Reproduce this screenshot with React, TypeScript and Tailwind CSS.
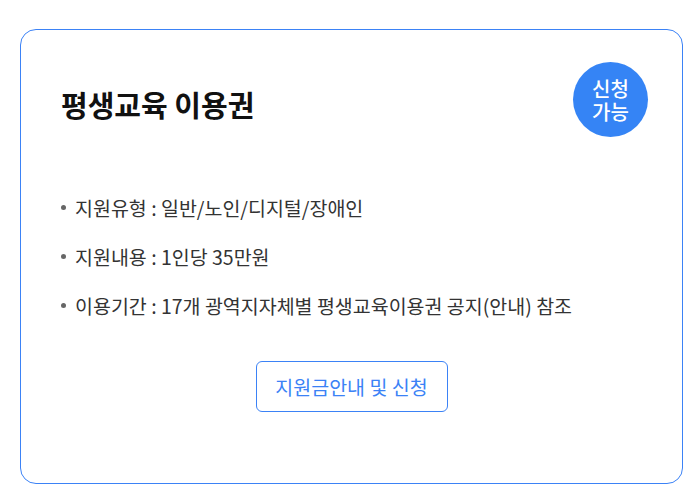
export default function App() {
  const items = [
    { label: "지원유형", value: "일반/노인/디지털/장애인" },
    { label: "지원내용", value: "1인당 35만원" },
    { label: "이용기간", value: "17개 광역지자체별 평생교육이용권 공지(안내) 참조" },
  ];

  return (
    <div
      className="min-h-[501px] bg-white pl-5 pt-[29px]"
      style={{ fontFamily: '"Noto Sans CJK KR", "Noto Sans", sans-serif' }}
    >
      <div className="relative flex h-[455px] w-[663px] flex-col rounded-2xl border border-[#3b82f6] px-10 pt-[54px]">
        {/* Title */}
        <h2 className="text-[29px] font-bold leading-[40px] text-[#111]">평생교육 이용권</h2>

        {/* Badge */}
        <div className="absolute right-[34px] top-[32px] flex h-[75px] w-[75px] flex-col items-center justify-center rounded-full bg-[#3584f5] text-center text-[20px] font-medium leading-[23px] text-white">
          <span>신청</span>
          <span>가능</span>
        </div>

        {/* Info list */}
        <ul className="mt-[70px] flex flex-col gap-[22px]">
          {items.map((item) => (
            <li key={item.label} className="flex items-center text-[19.5px] leading-[27px] text-[#333]">
              <span className="mr-[9px] h-[5px] w-[5px] rounded-full bg-[#666]" />
              {item.label} : {item.value}
            </li>
          ))}
        </ul>

        {/* Action */}
        <div className="mt-[42px] flex justify-center">
          <button className="h-[51px] w-[192px] rounded-md border border-[#3b82f6] bg-white text-[19.5px] text-[#3b82f6]">
            지원금안내 및 신청
          </button>
        </div>
      </div>
    </div>
  );
}
